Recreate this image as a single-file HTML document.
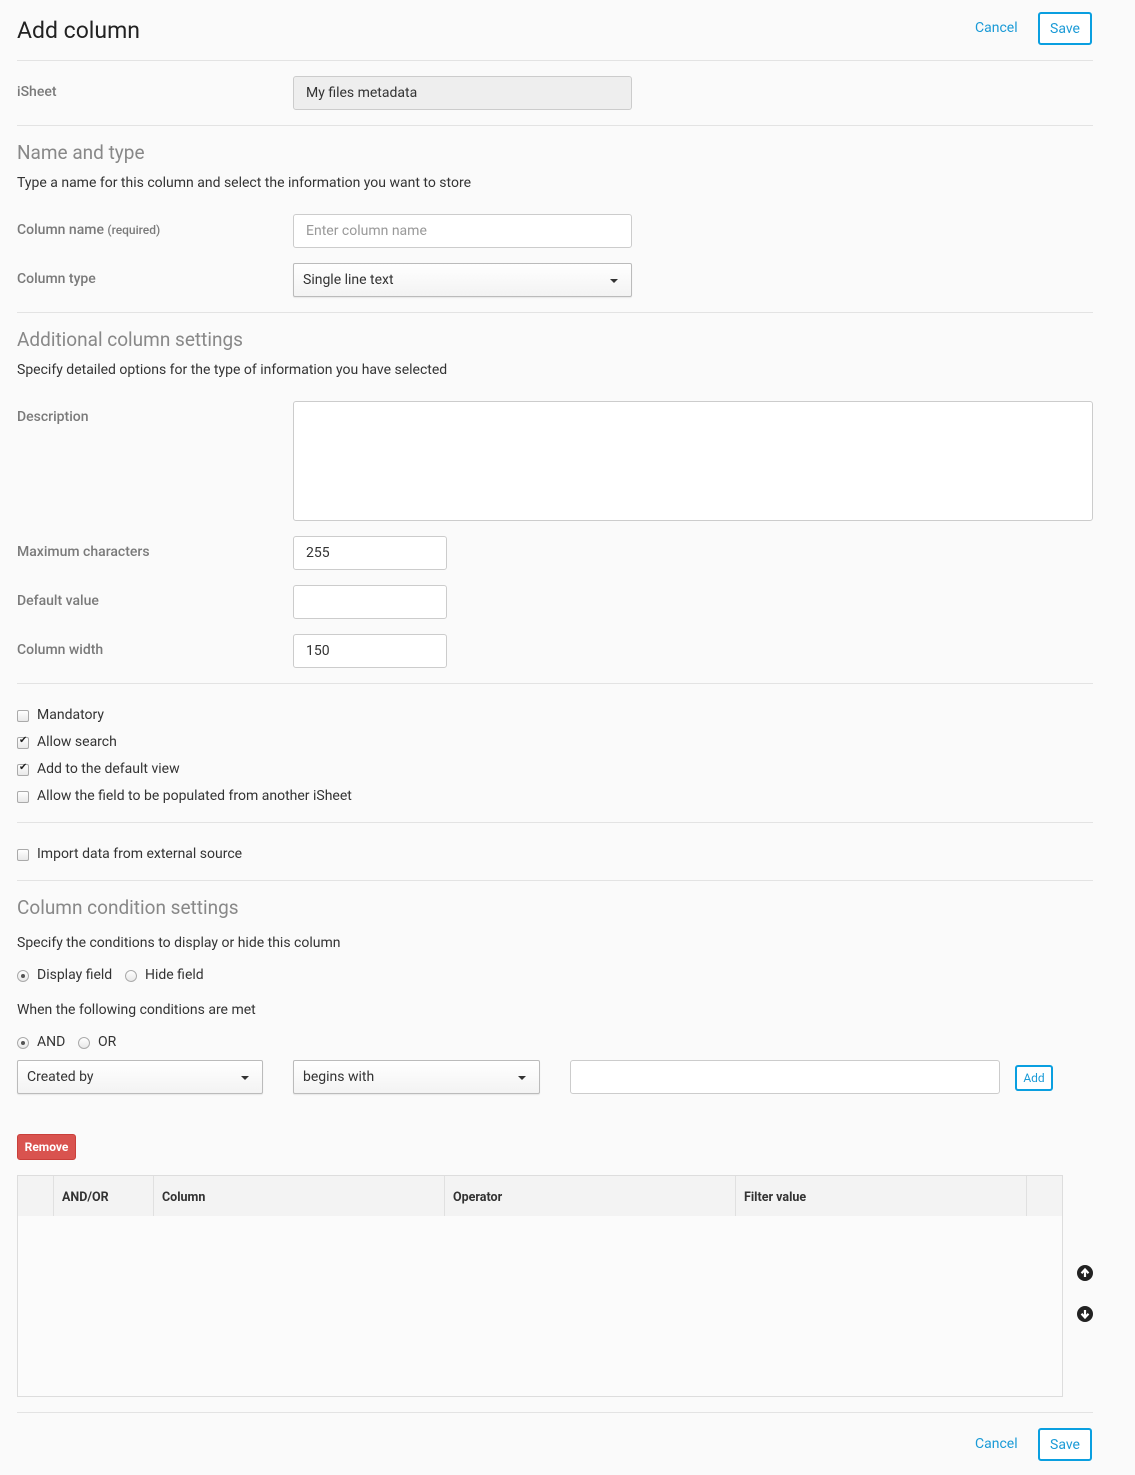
<!DOCTYPE html>
<html><head><meta charset="utf-8"><style>
*{box-sizing:border-box;margin:0;padding:0}
body{width:1135px;height:1475px;background:#fafafa;font-family:"Roboto","Liberation Sans",sans-serif;font-size:14px;color:#333;position:relative;overflow:hidden}
.a{position:absolute;white-space:nowrap}
.hr{position:absolute;left:17px;width:1076px;height:1px;background:#e3e3e3}
.lbl{position:absolute;left:17px;color:#7a7a7a;font-weight:500;font-size:14px}
.inp{position:absolute;background:#fff;border:1px solid #ccc;border-radius:3px;padding:0 12px;display:flex;align-items:center;color:#333}
.sel{position:absolute;background:linear-gradient(#fff,#f3f3f3);border:1px solid #bbb;border-radius:2px;padding:0 9px;display:flex;align-items:center;color:#333;box-shadow:0 1px 1px rgba(0,0,0,.08)}
.sel:after{content:"";position:absolute;right:13px;top:15px;border-left:4px solid transparent;border-right:4px solid transparent;border-top:4px solid #333}
.h2{position:absolute;left:17px;font-size:19px;color:#888}
.cb{position:absolute;left:17px;width:12px;height:12px;border:1px solid #aaa;border-radius:2px;background:linear-gradient(#fff,#e8e8e8)}
.cb.on:after{content:"✔";position:absolute;left:1px;top:-3px;font-size:10px;color:#222}
.rd{position:absolute;width:12px;height:12px;border:1px solid #aaa;border-radius:50%;background:linear-gradient(#fff,#e8e8e8)}
.rd.on:after{content:"";position:absolute;left:3px;top:3px;width:4px;height:4px;border-radius:50%;background:#555}
.blue{color:#1a9ad6}
.btn{position:absolute;border:2px solid #0a9fe0;border-radius:3px;color:#1a9ad6;display:flex;align-items:center;justify-content:center;background:#fff}
</style></head><body>
<div class="a" style="left:17px;top:17px;font-size:23px;color:#222">Add column</div>
<div class="a blue" style="left:975px;top:20px;font-size:14px">Cancel</div>
<div class="btn" style="left:1038px;top:12px;width:54px;height:33px;font-size:14px">Save</div>
<div class="hr" style="top:60px"></div>

<div class="lbl" style="top:84px">iSheet</div>
<div class="inp" style="left:293px;top:76px;width:339px;height:34px;background:#eee">My files metadata</div>
<div class="hr" style="top:125px"></div>

<div class="h2" style="top:141px">Name and type</div>
<div class="a" style="left:17px;top:175px">Type a name for this column and select the information you want to store</div>
<div class="lbl" style="top:222px">Column name <span style="font-size:12px">(required)</span></div>
<div class="inp" style="left:293px;top:214px;width:339px;height:34px;color:#999">Enter column name</div>
<div class="lbl" style="top:271px">Column type</div>
<div class="sel" style="left:293px;top:263px;width:339px;height:34px">Single line text</div>
<div class="hr" style="top:312px"></div>

<div class="h2" style="top:328px">Additional column settings</div>
<div class="a" style="left:17px;top:362px">Specify detailed options for the type of information you have selected</div>
<div class="lbl" style="top:409px">Description</div>
<div class="inp" style="left:293px;top:401px;width:800px;height:120px"></div>
<div class="lbl" style="top:544px">Maximum characters</div>
<div class="inp" style="left:293px;top:536px;width:154px;height:34px">255</div>
<div class="lbl" style="top:593px">Default value</div>
<div class="inp" style="left:293px;top:585px;width:154px;height:34px"></div>
<div class="lbl" style="top:642px">Column width</div>
<div class="inp" style="left:293px;top:634px;width:154px;height:34px">150</div>
<div class="hr" style="top:683px"></div>

<div class="cb" style="top:710px"></div><div class="a" style="left:37px;top:707px">Mandatory</div>
<div class="cb on" style="top:737px"></div><div class="a" style="left:37px;top:734px">Allow search</div>
<div class="cb on" style="top:764px"></div><div class="a" style="left:37px;top:761px">Add to the default view</div>
<div class="cb" style="top:791px"></div><div class="a" style="left:37px;top:788px">Allow the field to be populated from another iSheet</div>
<div class="hr" style="top:822px"></div>
<div class="cb" style="top:849px"></div><div class="a" style="left:37px;top:846px">Import data from external source</div>
<div class="hr" style="top:880px"></div>

<div class="h2" style="top:896px">Column condition settings</div>
<div class="a" style="left:17px;top:935px">Specify the conditions to display or hide this column</div>
<div class="rd on" style="left:17px;top:970px"></div><div class="a" style="left:37px;top:967px">Display field</div>
<div class="rd" style="left:125px;top:970px"></div><div class="a" style="left:145px;top:967px">Hide field</div>
<div class="a" style="left:17px;top:1002px">When the following conditions are met</div>
<div class="rd on" style="left:17px;top:1037px"></div><div class="a" style="left:37px;top:1034px">AND</div>
<div class="rd" style="left:78px;top:1037px"></div><div class="a" style="left:98px;top:1034px">OR</div>
<div class="sel" style="left:17px;top:1060px;width:246px;height:34px">Created by</div>
<div class="sel" style="left:293px;top:1060px;width:247px;height:34px">begins with</div>
<div class="inp" style="left:570px;top:1060px;width:430px;height:34px"></div>
<div class="btn" style="left:1015px;top:1065px;width:38px;height:26px;font-size:12px">Add</div>

<div class="a" style="left:17px;top:1134px;width:59px;height:26px;background:#d9534f;border:1px solid #c9403b;border-radius:3px;color:#fff;font-weight:bold;font-size:12px;display:flex;align-items:center;justify-content:center">Remove</div>

<div class="a" style="left:17px;top:1175px;width:1046px;height:222px;border:1px solid #ddd;background:#fbfbfb">
 <div style="height:40px;background:#f3f3f3;position:relative;font-weight:bold;font-size:12.5px;color:#333">
  <div class="a" style="left:35px;top:0;height:40px;border-left:1px solid #e0e0e0"></div>
  <div class="a" style="left:44px;top:14px">AND/OR</div>
  <div class="a" style="left:135px;top:0;height:40px;border-left:1px solid #e0e0e0"></div>
  <div class="a" style="left:144px;top:14px">Column</div>
  <div class="a" style="left:426px;top:0;height:40px;border-left:1px solid #e0e0e0"></div>
  <div class="a" style="left:435px;top:14px">Operator</div>
  <div class="a" style="left:717px;top:0;height:40px;border-left:1px solid #e0e0e0"></div>
  <div class="a" style="left:726px;top:14px">Filter value</div>
  <div class="a" style="left:1008px;top:0;height:40px;border-left:1px solid #e0e0e0"></div>
 </div>
</div>
<svg class="a" style="left:1077px;top:1265px" width="16" height="16" viewBox="0 0 16 16"><circle cx="8" cy="8" r="8" fill="#222"/><path d="M8 12V5M4.5 8.2L8 4.5l3.5 3.7" stroke="#fff" stroke-width="2.2" fill="none"/></svg>
<svg class="a" style="left:1077px;top:1306px" width="16" height="16" viewBox="0 0 16 16"><circle cx="8" cy="8" r="8" fill="#222"/><path d="M8 4v7M4.5 7.8L8 11.5l3.5-3.7" stroke="#fff" stroke-width="2.2" fill="none"/></svg>

<div class="hr" style="top:1412px"></div>
<div class="a blue" style="left:975px;top:1436px;font-size:14px">Cancel</div>
<div class="btn" style="left:1038px;top:1428px;width:54px;height:33px;font-size:14px">Save</div>
</body></html>
